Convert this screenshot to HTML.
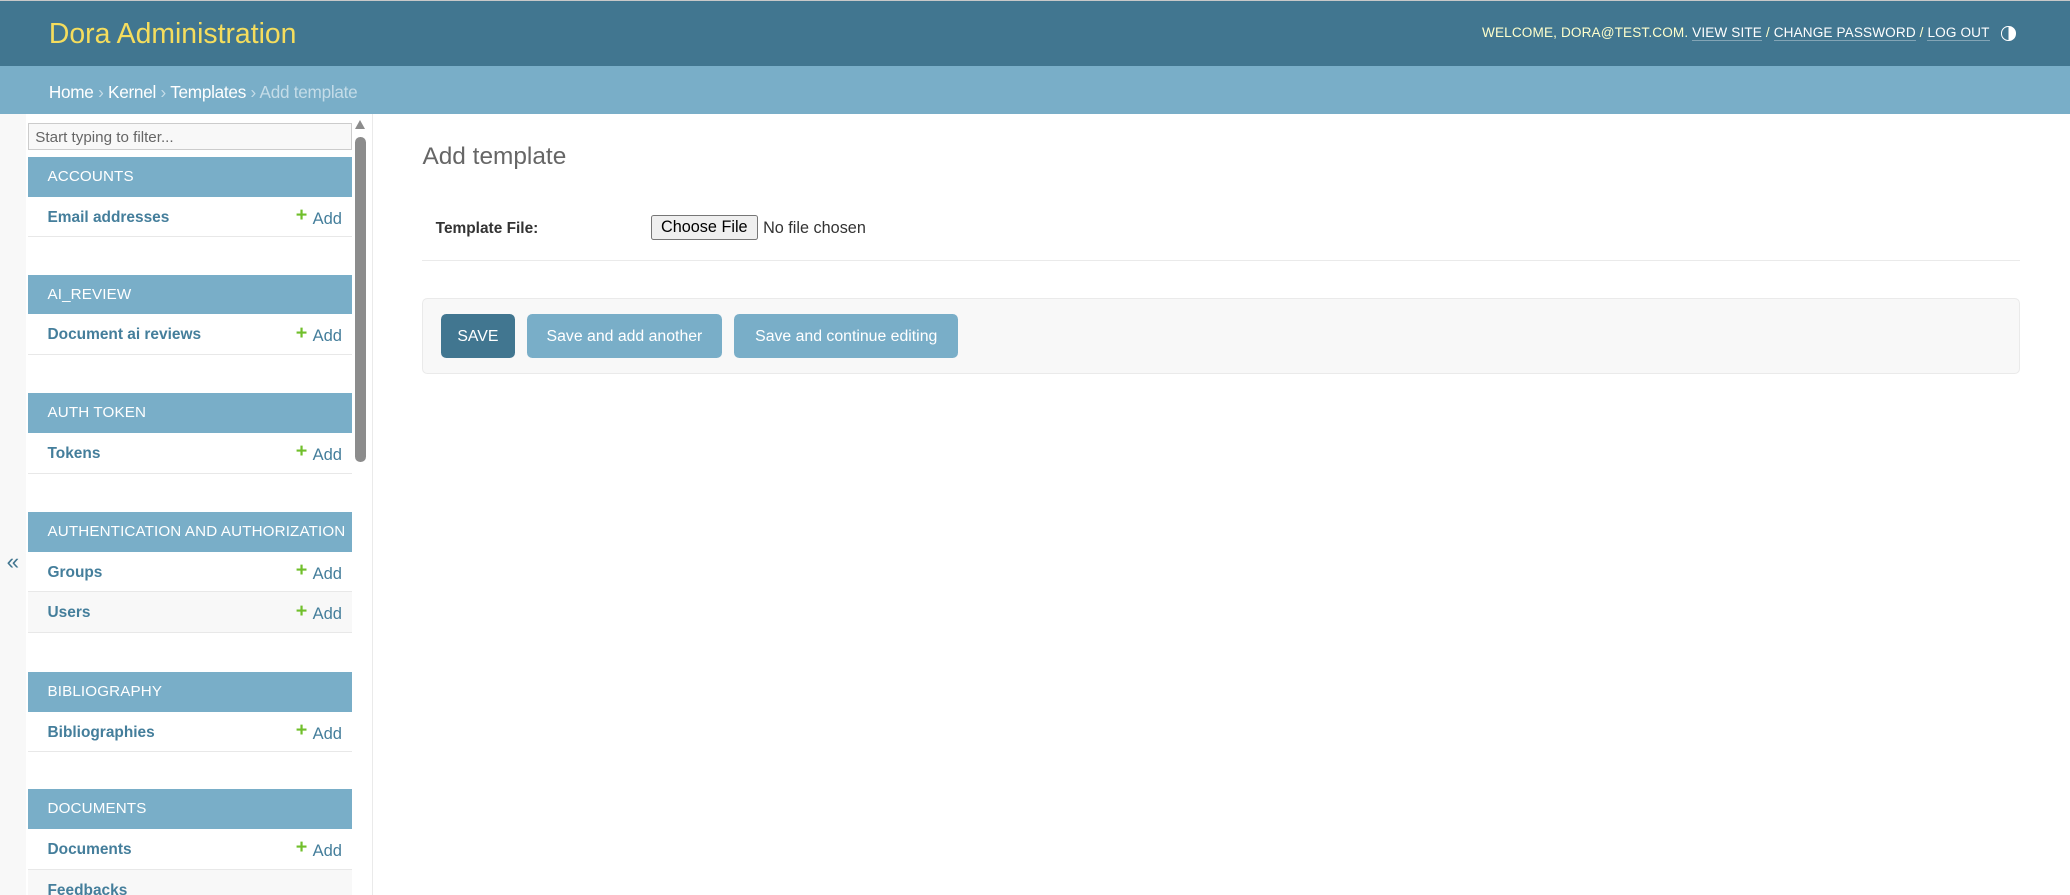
<!DOCTYPE html>
<html><head><meta charset="utf-8"><style>
html,body{margin:0;padding:0;background:#fff;overflow:hidden}
body{width:2070px;height:895px}
#w{zoom:1.3202;width:1568px;height:678px;position:relative;font-family:"Liberation Sans",sans-serif;color:#333;font-size:14px;overflow:hidden}
#hdr{position:absolute;left:0;top:0;width:1568px;height:50px;background:#417690;border-top:1px solid #c8c8c8;box-sizing:border-box}
#hdr .t{position:absolute;left:37px;top:13px;font-size:21.5px;color:#f5dd5d;font-weight:300}
#hdr .u{position:absolute;right:61px;top:18px;font-size:10.3px;color:#ffc;letter-spacing:0.1px;white-space:nowrap}
#hdr .u b{font-weight:normal}
#hdr .u a{color:#fff;border-bottom:1px solid rgba(255,255,255,.35);text-decoration:none}
#hdr .ic{position:absolute;left:1516px;top:19px;width:11px;height:11px;border:1.5px solid #fff;border-radius:50%;box-sizing:border-box;background:linear-gradient(90deg,transparent 50%,#fff 50%)}
#bc{position:absolute;left:0;top:50px;width:1568px;height:36px;background:#79aec8;color:#c4dce8;font-size:13px}
#bc span{position:absolute;left:37px;top:12px;letter-spacing:-0.2px}
#bc a{color:#fff}
#strip{position:absolute;left:0;top:86px;width:20px;height:592px;background:#f8f8f8}
#strip .q{position:absolute;left:5px;top:330px;color:#417690;font-size:17px}
#side{position:absolute;left:20px;top:86px;width:262px;height:592px;border-right:1px solid #eaeaea}
#flt{position:absolute;left:1px;top:7px;width:246px;height:21px;border:1px solid #ccc;background:#f8f8f8;box-sizing:border-box;font-size:11.5px;color:#666;padding:4px 0 0 5px}
#sb{position:absolute;left:249px;top:18px;width:8px;height:246px;background:#8c8c8c;border-radius:4px}
#sa{position:absolute;left:249px;top:5px;width:0;height:0;border-left:4.5px solid transparent;border-right:4.5px solid transparent;border-bottom:7px solid #8c8c8c}
.mod{position:absolute;left:1px;width:246px}
.mh{height:30px;background:#79aec8;color:#fff;font-size:11.5px;line-height:31px;padding-left:15px;white-space:nowrap;letter-spacing:0.1px}
.r{height:30px;border-bottom:1px solid #e8e8e8;position:relative;font-size:11.7px;line-height:32px}
.r.alt{background:#f8f8f8}
.r .n{position:absolute;left:15px;color:#447e9b;font-weight:bold}
.r .a{position:absolute;right:8px;color:#447e9b;font-size:12.5px}
.r .a i{font-style:normal;color:#70bf2b;font-weight:bold;font-size:15px;margin-right:4px;position:relative;top:-2px}
h1{position:absolute;left:320px;top:108px;margin:0;font-size:18.5px;font-weight:300;color:#666}
.lbl{position:absolute;left:330px;top:167px;font-size:11.7px;font-weight:bold;color:#333}
.btnf{position:absolute;left:493px;top:163px;width:81px;height:19px;border:1px solid #767676;border-radius:2px;background:#efefef;box-sizing:border-box;font-size:12.3px;color:#000;text-align:center;line-height:17px}
.nf{position:absolute;left:578px;top:166px;font-size:12.3px;color:#333}
.div{position:absolute;left:320px;top:197px;width:1210px;height:1px;background:#eaeaea}
.sub{position:absolute;left:320px;top:226px;width:1210px;height:57px;background:#f8f8f8;border:1px solid #eaeaea;border-radius:4px;box-sizing:border-box}
.b{position:absolute;top:238px;height:33px;border-radius:4px;color:#fff;font-size:12px;line-height:35px;text-align:center}
</style></head><body><div id="w">
<div id="hdr"><div class="t">Dora Administration</div>
<div class="u">WELCOME, <b>DORA@TEST.COM</b>. <a>VIEW SITE</a> / <a>CHANGE PASSWORD</a> / <a>LOG OUT</a></div><div class="ic"></div></div>
<div id="bc"><span><a>Home</a> › <a>Kernel</a> › <a>Templates</a> › Add template</span></div>
<div id="strip"><div class="q">«</div></div>
<div id="side">
<div id="flt">Start typing to filter...</div>
<div id="sa"></div><div id="sb"></div>
<div class="mod" style="top:33px"><div class="mh">ACCOUNTS</div><div class="r"><span class="n">Email addresses</span><span class="a"><i>+</i>Add</span></div></div>
<div class="mod" style="top:122px"><div class="mh">AI_REVIEW</div><div class="r"><span class="n">Document ai reviews</span><span class="a"><i>+</i>Add</span></div></div>
<div class="mod" style="top:212px"><div class="mh">AUTH TOKEN</div><div class="r"><span class="n">Tokens</span><span class="a"><i>+</i>Add</span></div></div>
<div class="mod" style="top:302px"><div class="mh">AUTHENTICATION AND AUTHORIZATION</div><div class="r"><span class="n">Groups</span><span class="a"><i>+</i>Add</span></div><div class="r alt"><span class="n">Users</span><span class="a"><i>+</i>Add</span></div></div>
<div class="mod" style="top:423px"><div class="mh">BIBLIOGRAPHY</div><div class="r"><span class="n">Bibliographies</span><span class="a"><i>+</i>Add</span></div></div>
<div class="mod" style="top:512px"><div class="mh">DOCUMENTS</div><div class="r"><span class="n">Documents</span><span class="a"><i>+</i>Add</span></div><div class="r alt"><span class="n">Feedbacks</span></div></div>
</div>
<h1>Add template</h1>
<div class="lbl">Template File:</div>
<div class="btnf">Choose File</div><div class="nf">No file chosen</div>
<div class="div"></div>
<div class="sub"></div>
<div class="b" style="left:334px;width:56px;background:#417690">SAVE</div>
<div class="b" style="left:399px;width:148px;background:#79aec8">Save and add another</div>
<div class="b" style="left:556px;width:170px;background:#79aec8">Save and continue editing</div>
</div></body></html>
